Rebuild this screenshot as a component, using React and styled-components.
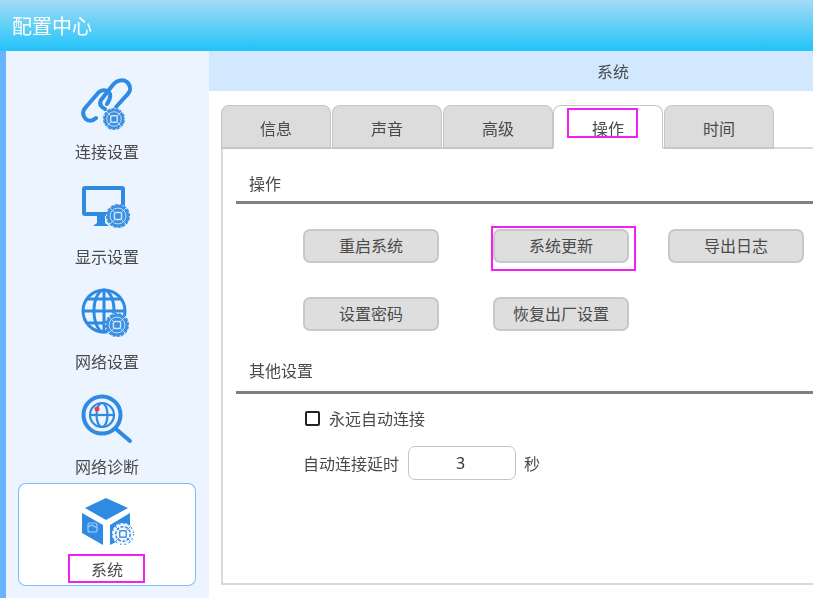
import styled, { createGlobalStyle } from "styled-components"

const GlobalStyle = createGlobalStyle`
  html, body {
    margin: 0;
    padding: 0;
    background: #fff;
  }
  body {
    font-family: "Noto Sans CJK SC", "Liberation Sans", sans-serif;
    color: #4a4a4a;
  }
`

const Page = styled.div`
  width: 813px;
  height: 605px;
  overflow: hidden;
  display: flex;
  flex-direction: column;
  filter: blur(0.35px);
`

const Header = styled.header`
  height: 51px;
  flex: none;
  box-sizing: border-box;
  padding-left: 12px;
  display: flex;
  align-items: center;
  font-size: 20px;
  color: #fff;
  background: linear-gradient(#a3dcf5, #20c3f9);
`

const Body = styled.div`
  flex: 1;
  display: flex;
  min-height: 0;
`

const Sidebar = styled.nav`
  width: 209px;
  height: 547px;
  flex: none;
  box-sizing: border-box;
  padding: 12px 13px 0 12px;
  background: #ebf4ff;
  border-left: 6px solid #66b3ff;
  display: flex;
  flex-direction: column;
  gap: 2px;
`

const NavItem = styled.div`
  position: relative;
  height: 103px;
  flex: none;
  box-sizing: border-box;
  padding-top: 14px;
  border-radius: 8px;
  display: flex;
  flex-direction: column;
  align-items: center;
  background: ${({ $active }) => ($active ? "#fff" : "transparent")};
  box-shadow: ${({ $active }) => ($active ? "inset 0 0 0 1px #7cbcfb" : "none")};
`

const NavIcon = styled.svg`
  width: 56px;
  height: 56px;
  flex: none;
`

const NavLabel = styled.span`
  margin-top: ${({ $active }) => ($active ? "4px" : "6px")};
  font-size: 16px;
  line-height: 24px;
`

// magenta annotation boxes drawn over the screenshot
const Mark = styled.span`
  position: absolute;
  box-sizing: border-box;
  border: 2px solid #f51ef5;
  pointer-events: none;
  left: ${({ $left }) => $left}px;
  top: ${({ $top }) => $top}px;
  width: ${({ $w }) => $w}px;
  height: ${({ $h }) => $h}px;
`

const Main = styled.main`
  flex: 1;
  min-width: 0;
  display: flex;
  flex-direction: column;
`

const TitleBar = styled.div`
  height: 40px;
  flex: none;
  background: #d2e8fe;
  font-size: 16px;
  display: flex;
  align-items: center;
  justify-content: center;
  padding-left: 204px;
`

const Tabs = styled.div`
  display: flex;
  margin: 14px 0 0 12px;
  position: relative;
  z-index: 1;
`

const Tab = styled.div`
  position: relative;
  width: 110px;
  height: 44px;
  margin-right: ${({ $gap }) => $gap}px;
  box-sizing: border-box;
  padding-top: 3px;
  display: flex;
  align-items: center;
  justify-content: center;
  font-size: 16px;
  border: 1px solid #c6c6c6;
  border-radius: 8px 8px 0 0;
  background: ${({ $active }) => ($active ? "#fff" : "#dcdcdc")};
  border-bottom: ${({ $active }) => ($active ? "2px solid #fff" : "2px solid #c6c6c6")};
`

const Panel = styled.div`
  margin: -2px 0 0 12px;
  height: 438px;
  flex: none;
  box-sizing: border-box;
  border: 2px solid #d9d9d9;
  border-right: none;
  padding: 16px 0 0 13px;
  display: flex;
  flex-direction: column;
`

const SectionTitle = styled.h3`
  margin: 0;
  height: ${({ $h }) => $h}px;
  box-sizing: border-box;
  padding-left: 13px;
  font-size: 16px;
  font-weight: 400;
  line-height: 36px;
  border-bottom: 3px solid #808080;
`

const ButtonGrid = styled.div`
  display: grid;
  grid-template-columns: 190px 175px 136px;
  row-gap: 34px;
  padding: 25px 0 0 67px;
  margin-bottom: 21px;
`

const ActionButton = styled.button`
  position: relative;
  width: 136px;
  height: 34px;
  padding: 0 0 2px;
  border: 2px solid #c8c8c8;
  border-radius: 7px;
  background: #dedede;
  color: #4a4a4a;
  font: inherit;
  font-size: 16px;
`

const OptionRow = styled.div`
  display: flex;
  align-items: center;
  padding-left: 67px;
  font-size: 16px;
  line-height: 24px;
  margin-top: ${({ $top }) => $top}px;
`

const Checkbox = styled.span`
  width: 15px;
  height: 15px;
  box-sizing: border-box;
  margin: 0 9px 0 2px;
  border: 2px solid #222;
  border-radius: 2px;
`

const DelayInput = styled.div`
  width: 108px;
  height: 34px;
  box-sizing: border-box;
  margin: 0 8px 0 9px;
  border: 1px solid #c4c4c4;
  border-radius: 7px;
  display: flex;
  align-items: center;
  justify-content: center;
  padding-right: 3px;
  font-family: "Noto Sans", sans-serif;
  font-size: 16px;
  color: #333;
`

const BLUE = "#2f8ae2"

// the little ball with a gear that sits on each nav icon
function GearBall({ cx, cy, r, light }) {
  const main = light ? "#f4f9fe" : "#3a8fe2"
  const line = light ? "#3f94e5" : "#cfe3f8"
  const d = r * 0.72
  return (
    <g>
      <circle cx={cx} cy={cy} r={r} fill={main} />
      <circle cx={cx} cy={cy} r={r - 0.5} fill="none" stroke={line} strokeWidth="1.2" strokeDasharray="1.5 3" />
      <circle cx={cx} cy={cy} r={r * 0.66} fill="none" stroke={line} strokeWidth={light ? 1.6 : 0.9} strokeDasharray={light ? "3 1.5" : "none"} />
      <rect x={cx - r * 0.3} y={cy - r * 0.3} width={r * 0.6} height={r * 0.6} rx="1.5" fill="none" stroke={line} strokeWidth="1.5" />
      <path
        d={`M${cx - d} ${cy - d} L${cx - r * 0.3} ${cy - r * 0.3} M${cx + d} ${cy - d} L${cx + r * 0.3} ${cy - r * 0.3} M${cx - d} ${cy + d} L${cx - r * 0.3} ${cy + r * 0.3} M${cx + d} ${cy + d} L${cx + r * 0.3} ${cy + r * 0.3}`}
        stroke={line}
        strokeWidth="0.9"
      />
    </g>
  )
}

function LinkIcon() {
  return (
    <NavIcon viewBox="0 0 56 56">
      <g fill="none" stroke={BLUE} strokeWidth="4" strokeLinecap="round">
        <path d="M26 32 C22 30 20 27 22 23 L33 9 C37 3 44 2 48 5 C52 9 52 14 48 18 L37 30" />
        <path d="M17 41 C13 45 8 44 6 41 C3 37 4 33 7 30 L20 15 C24 12 29 13 31 17 C32 21 30 24 28 27" />
      </g>
      <GearBall cx={35} cy={42} r={11} />
    </NavIcon>
  )
}

function MonitorIcon() {
  return (
    <NavIcon viewBox="0 0 56 56">
      <rect x="5" y="6" width="39" height="26" rx="1" fill="none" stroke={BLUE} strokeWidth="4" />
      <path d="M14 44 L18 41 V33 H26 V41 L30 44 Z" fill={BLUE} />
      <GearBall cx={39} cy={34} r={12} />
    </NavIcon>
  )
}

function GlobeIcon() {
  return (
    <NavIcon viewBox="0 0 56 56">
      <g fill="none" stroke={BLUE} strokeWidth="3">
        <circle cx="25" cy="24" r="21" />
        <ellipse cx="25" cy="24" rx="10" ry="21" />
        <path d="M25 3 V45 M4 24 H46 M8 12 H42 M8 36 H42" />
      </g>
      <GearBall cx={38} cy={38} r={12} />
    </NavIcon>
  )
}

function DiagnoseIcon() {
  return (
    <NavIcon viewBox="0 0 56 56">
      <g fill="none" stroke={BLUE}>
        <circle cx="23" cy="23" r="18.5" strokeWidth="4" />
        <path d="M37 37 L51 49" strokeWidth="4" strokeLinecap="round" />
        <g strokeWidth="2.2">
          <circle cx="23" cy="23" r="12" />
          <ellipse cx="23" cy="23" rx="5.5" ry="12" />
          <path d="M11 23 H35" />
        </g>
      </g>
      <circle cx="18" cy="17" r="2.5" fill="#ef3a4e" />
    </NavIcon>
  )
}

function CubeIcon() {
  return (
    <NavIcon viewBox="0 0 56 56">
      <g fill={BLUE}>
        <path d="M27 1 L49 11 L27 23 L6 11 Z" />
        <path d="M3 16 L24 28 V48 L3 36 Z" />
        <path d="M31 28 L51 16 V38 L31 48 Z" />
      </g>
      <g fill="none" stroke="#a5cdf4" strokeWidth="1.2">
        <rect x="9" y="26" width="9" height="9" rx="2" />
        <path d="M9 30 L13 28 L18 31" />
      </g>
      <GearBall cx={44} cy={37} r={11} light />
    </NavIcon>
  )
}

const navItems = [
  { label: "连接设置", Icon: LinkIcon },
  { label: "显示设置", Icon: MonitorIcon },
  { label: "网络设置", Icon: GlobeIcon },
  { label: "网络诊断", Icon: DiagnoseIcon },
  { label: "系统", Icon: CubeIcon, active: true },
]

const tabs = [
  { label: "信息", gap: 1 },
  { label: "声音", gap: 1 },
  { label: "高级", gap: 0 },
  { label: "操作", gap: 1, active: true },
  { label: "时间", gap: 0 },
]

export default function App() {
  return (
    <Page>
      <GlobalStyle />
      <Header>配置中心</Header>
      <Body>
        <Sidebar>
          {navItems.map(({ label, Icon, active }) => (
            <NavItem key={label} $active={active}>
              <Icon />
              <NavLabel $active={active}>{label}</NavLabel>
              {active && <Mark $left={50} $top={71} $w={77} $h={29} />}
            </NavItem>
          ))}
        </Sidebar>
        <Main>
          <TitleBar>系统</TitleBar>
          <Tabs>
            {tabs.map((tab) => (
              <Tab key={tab.label} $active={tab.active} $gap={tab.gap}>
                {tab.label}
                {tab.active && <Mark $left={13} $top={2} $w={71} $h={30} />}
              </Tab>
            ))}
          </Tabs>
          <Panel>
            <SectionTitle $h={39}>操作</SectionTitle>
            <ButtonGrid>
              <ActionButton>重启系统</ActionButton>
              <ActionButton>
                系统更新
                <Mark $left={-4} $top={-5} $w={145} $h={45} />
              </ActionButton>
              <ActionButton>导出日志</ActionButton>
              <ActionButton>设置密码</ActionButton>
              <ActionButton>恢复出厂设置</ActionButton>
            </ButtonGrid>
            <SectionTitle $h={42}>其他设置</SectionTitle>
            <OptionRow $top={12}>
              <Checkbox />
              永远自动连接
            </OptionRow>
            <OptionRow $top={16}>
              自动连接延时
              <DelayInput>3</DelayInput>
              秒
            </OptionRow>
          </Panel>
        </Main>
      </Body>
    </Page>
  )
}
